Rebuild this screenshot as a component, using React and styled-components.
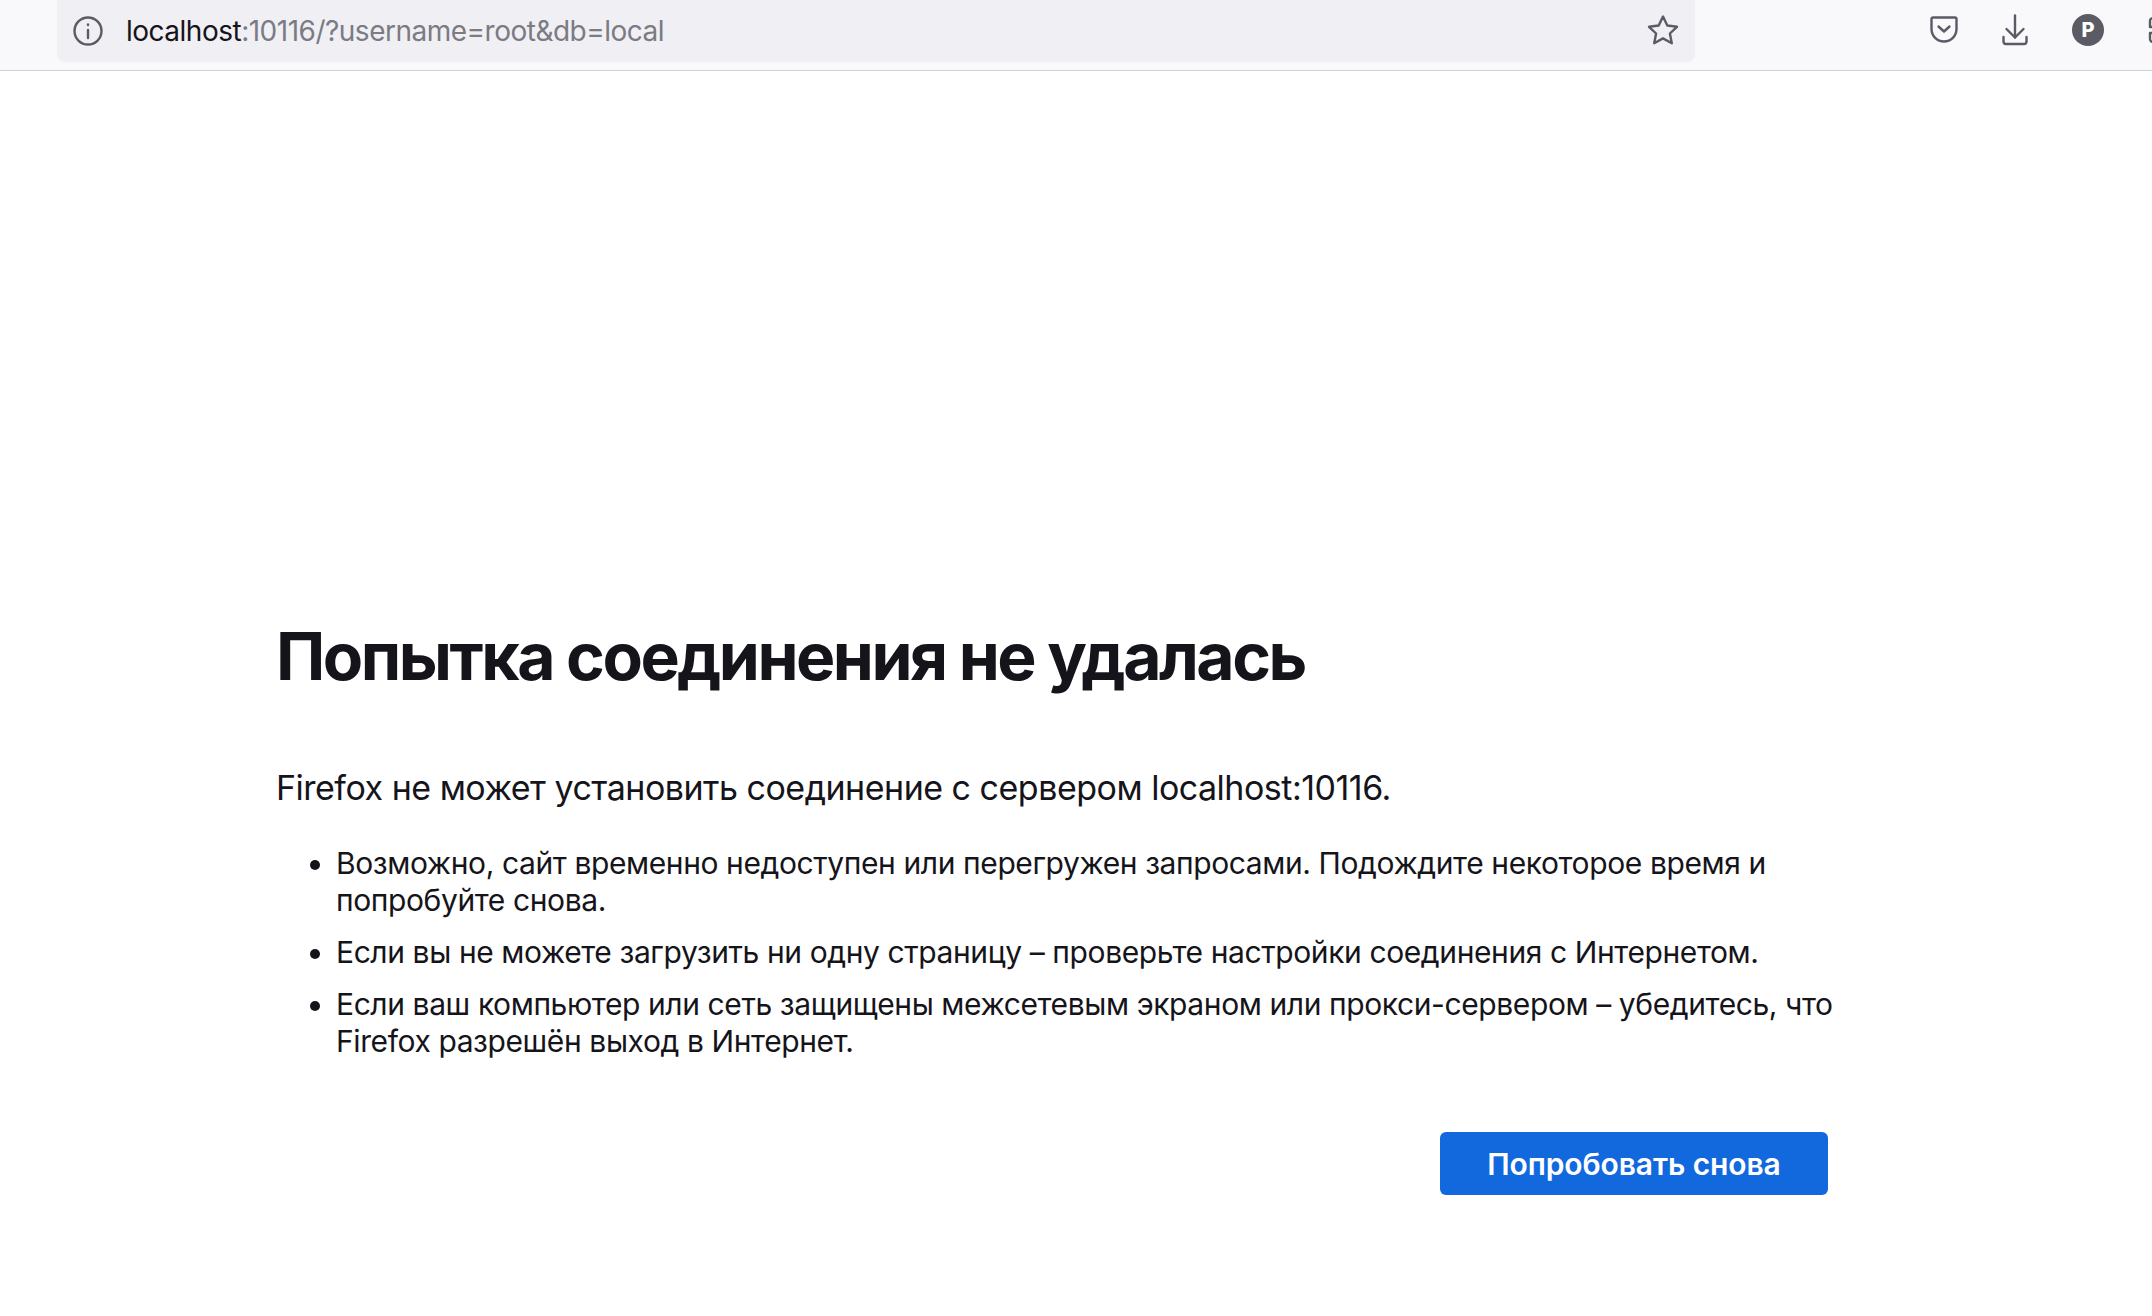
import styled, { createGlobalStyle } from "styled-components";

const GlobalStyle = createGlobalStyle`
  html, body {
    margin: 0;
    padding: 0;
    background: #fff;
    overflow: hidden;
  }
  body {
    font-family: Inter, "Noto Sans", sans-serif;
    color: #15141a;
  }
`;

const Page = styled.div`
  width: 2152px;
  height: 1316px;
  overflow: hidden;
  display: flex;
  flex-direction: column;
`;

const Toolbar = styled.header`
  height: 70px;
  flex: none;
  background: #f9f9fb;
  border-bottom: 1px solid #cfcfd8;
  display: flex;
  align-items: flex-start;
  padding-left: 57px;
  overflow: hidden;
`;

const UrlBar = styled.div`
  width: 1638px;
  height: 62px;
  flex: none;
  background: #f0f0f4;
  border-radius: 0 0 8px 8px;
  display: flex;
  align-items: center;
  padding: 0 15px 0 16px;
  box-sizing: border-box;
`;

const UrlText = styled.div`
  flex: 1;
  margin-left: 23px;
  font-size: 28px;
  letter-spacing: -0.5px;
  color: #7b7b84;
  white-space: nowrap;
`;

const Host = styled.span`
  color: #15141a;
`;

const Tools = styled.div`
  display: flex;
  align-items: center;
  height: 60px;
  margin-left: 235px;
  gap: 44px;
`;

const Avatar = styled.div`
  width: 32px;
  height: 32px;
  flex: none;
  border-radius: 50%;
  background: #5b5b66;
  color: #fff;
  font-size: 20px;
  font-weight: 800;
  display: flex;
  align-items: center;
  justify-content: center;
`;

const Main = styled.main`
  padding: 542px 0 0 276px;
  width: 1568px;
`;

const Title = styled.h1`
  margin: 0;
  font-size: 66px;
  line-height: 86px;
  font-weight: 700;
  letter-spacing: -2.5px;
  white-space: nowrap;
`;

const Lead = styled.p`
  margin: 66px 0 0;
  font-size: 34px;
  line-height: 46px;
  letter-spacing: -0.5px;
`;

const Tips = styled.ul`
  margin: 34px 0 0;
  padding: 0 0 0 60px;
  font-size: 30px;
  line-height: 37px;
  letter-spacing: -0.4px;
`;

const Tip = styled.li`
  margin-bottom: 15px;
`;

const Actions = styled.div`
  display: flex;
  justify-content: flex-end;
  margin-top: 72px;
  padding-right: 16px;
`;

const RetryButton = styled.button`
  width: 388px;
  height: 63px;
  border: 0;
  border-radius: 6px;
  background: #1268dd;
  color: #fff;
  font-family: inherit;
  font-size: 30px;
  font-weight: 600;
  letter-spacing: -0.1px;
`;

const Icon = styled.svg`
  flex: none;
  fill: none;
  stroke: #5b5b66;
  stroke-width: 2.4;
  stroke-linecap: round;
  stroke-linejoin: round;
`;

const App = () => {
  return (
    <Page>
      <GlobalStyle />
      <Toolbar>
        <UrlBar>
          <Icon width="30" height="30" viewBox="0 0 30 30">
            <circle cx="15" cy="15" r="13.500" />
            <path d="M15 14v8" />
            <path d="M15 8.500v.5" />
          </Icon>
          <UrlText>
            <Host>localhost</Host>:10116/?username=root&amp;db=local
          </UrlText>
          <Icon width="34" height="34" viewBox="0 0 34 34">
            <path d="M17 2.500l4.300 9 9.700 1.300-7.100 6.700 1.900 9.700-8.800-4.800-8.800 4.800 1.900-9.700-7.100-6.700 9.700-1.300z" />
          </Icon>
        </UrlBar>
        <Tools>
          <Icon width="28" height="28" viewBox="0 0 28 28">
            <path d="M3 1.500h22a1.500 1.500 0 0 1 1.500 1.500v10c0 7-5.600 12.500-12.500 12.500S1.500 20 1.500 13V3A1.500 1.500 0 0 1 3 1.500z" />
            <path d="M8.500 10.500l5.500 5 5.500-5" />
          </Icon>
          <Icon width="26" height="32" viewBox="0 0 26 32">
            <path d="M13 1.500v22" />
            <path d="M4.500 15l8.500 8.500 8.500-8.500" />
            <path d="M1.500 23v4.500a2.500 2.500 0 0 0 2.500 2.500h18a2.500 2.500 0 0 0 2.500-2.500V23" />
          </Icon>
          <Avatar>P</Avatar>
          <Icon width="30" height="32" viewBox="0 0 30 32">
            <path d="M5 4h8v9H2V7a3 3 0 0 1 3-3z" />
            <path d="M2 19h11v9H5a3 3 0 0 1-3-3z" />
          </Icon>
        </Tools>
      </Toolbar>
      <Main>
        <Title>Попытка соединения не удалась</Title>
        <Lead>Firefox не может установить соединение с сервером localhost:10116.</Lead>
        <Tips>
          <Tip>Возможно, сайт временно недоступен или перегружен запросами. Подождите некоторое время и попробуйте снова.</Tip>
          <Tip>Если вы не можете загрузить ни одну страницу – проверьте настройки соединения с Интернетом.</Tip>
          <Tip>Если ваш компьютер или сеть защищены межсетевым экраном или прокси-сервером – убедитесь, что Firefox разрешён выход в Интернет.</Tip>
        </Tips>
        <Actions>
          <RetryButton>Попробовать снова</RetryButton>
        </Actions>
      </Main>
    </Page>
  );
};

export default App;
